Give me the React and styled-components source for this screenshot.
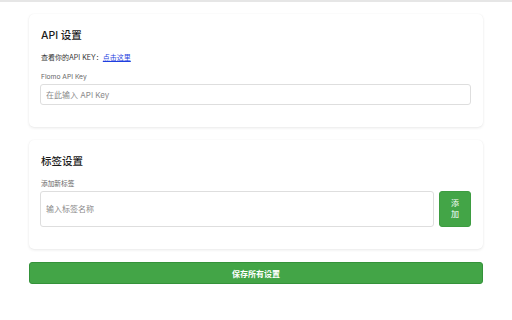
import styled, { createGlobalStyle } from "styled-components";

const GlobalStyle = createGlobalStyle`
  html, body {
    margin: 0;
    padding: 0;
    background: #ffffff;
  }
  body {
    font-family: "Inter", "Noto Sans CJK SC", sans-serif;
    color: #222;
  }
  * { box-sizing: border-box; }
`;

export default function App() {
  return (
    <>
      <GlobalStyle />
      <Page>
        <Container>
          <Card>
            <CardTitle>API 设置</CardTitle>
            <Hint>
              查看你的API KEY：<Link href="#">点击这里</Link>
            </Hint>
            <Label>Flomo API Key</Label>
            <Input type="text" placeholder="在此输入 API Key" />
          </Card>

          <Card>
            <CardTitle>标签设置</CardTitle>
            <Label $first>添加新标签</Label>
            <Row>
              <Input $tall $grow type="text" placeholder="输入标签名称" />
              <AddButton>添加</AddButton>
            </Row>
          </Card>

          <SaveButton>保存所有设置</SaveButton>
        </Container>
      </Page>
    </>
  );
}

const Page = styled.div`
  min-height: 320px;
  border-top: 2px solid #e6e6e6;
  padding-top: 12px;
`;

const Container = styled.div`
  width: 454px;
  margin: 0 auto;
  display: flex;
  flex-direction: column;
  gap: 13px;
`;

const Card = styled.div`
  background: #fff;
  border-radius: 5px;
  box-shadow: 0 1px 3px rgba(0, 0, 0, 0.09), 0 0 1px rgba(0, 0, 0, 0.05);
  padding: 14px 12px 22px 11px;
  display: flex;
  flex-direction: column;
`;

const CardTitle = styled.div`
  font-size: 10.5px;
  font-weight: 500;
  line-height: 16px;
  color: #1a1a1a;
  padding-left: 1px;
  margin-bottom: 8px;
`;

const Hint = styled.div`
  font-size: 7px;
  line-height: 12px;
  color: #333;
  padding-left: 1px;
  margin-bottom: 8px;
`;

const Link = styled.a`
  color: #1f3fe0;
  text-decoration: underline;
`;

const Label = styled.div`
  font-size: 6.7px;
  line-height: 10px;
  color: #666;
  padding-left: 1px;
  margin-top: ${(p) => (p.$first ? "1px" : "0")};
  margin-bottom: 2px;
`;

const Row = styled.div`
  display: flex;
  gap: 5px;
  align-items: stretch;
`;

const Input = styled.input`
  flex: ${(p) => (p.$grow ? "1" : "none")};
  width: 100%;
  min-width: 0;
  height: ${(p) => (p.$tall ? "36px" : "21px")};
  border: 1px solid #dedede;
  border-radius: 3px;
  padding: 0 5px;
  font-family: "Inter", "Noto Sans CJK SC", sans-serif;
  font-size: 8px;
  color: #333;
  outline: none;
  &::placeholder {
    color: #8a8a8a;
  }
`;

const AddButton = styled.button`
  width: 32px;
  flex-shrink: 0;
  background: #43a547;
  border: 1px solid #3d9c41;
  border-radius: 3px;
  color: #fff;
  font-family: "Inter", "Noto Sans CJK SC", sans-serif;
  font-size: 8px;
  line-height: 11px;
  padding: 0 8px;
  cursor: pointer;
`;

const SaveButton = styled.button`
  width: 100%;
  height: 22px;
  background: #43a547;
  border: 1px solid #34923a;
  border-radius: 3px;
  color: #fff;
  font-family: "Inter", "Noto Sans CJK SC", sans-serif;
  font-size: 8px;
  font-weight: 700;
  cursor: pointer;
`;
